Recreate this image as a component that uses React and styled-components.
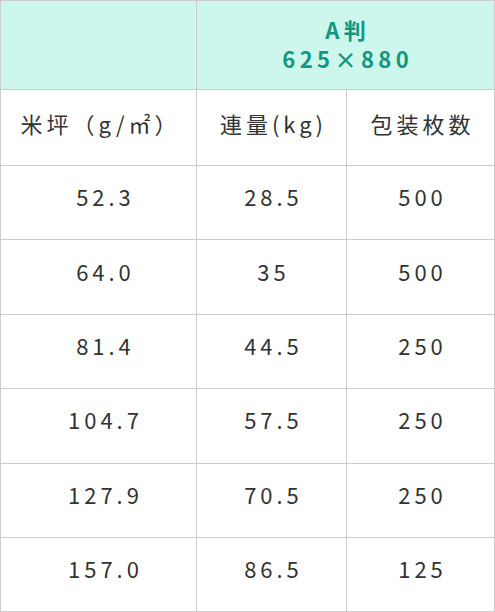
import React from 'react';
import styled, { createGlobalStyle } from 'styled-components';

const GlobalStyle = createGlobalStyle`
  html, body {
    margin: 0;
    padding: 0;
    background: #ffffff;
  }
  body {
    font-family: "Noto Sans CJK JP", "Noto Sans", sans-serif;
  }
`;

const SizeTable = styled.table`
  width: 494px;
  border-collapse: collapse;
  table-layout: fixed;
  color: #333333;
`;

const HeadCell = styled.th`
  height: 86px;
  padding: 0 0 2px 0.2em;
  background-color: #cdf7ec;
  border: 1px solid #cccccc;
  color: #12967f;
  font-size: 22px;
  font-weight: 700;
  line-height: 29px;
  letter-spacing: 0.2em;
  text-align: center;
`;

const LabelCell = styled.td`
  height: 67px;
  padding: 0 0 8px 0.18em;
  border: 1px solid #cccccc;
  font-size: 22px;
  font-weight: 400;
  line-height: 1.4;
  letter-spacing: 0.18em;
  text-align: center;
`;

const ValueCell = styled.td`
  height: 61.4px;
  padding: 0 0 12px ${({ $first }) => ($first ? '14px' : '4px')};
  border: 1px solid #cccccc;
  font-size: 22px;
  font-weight: 400;
  line-height: 1.4;
  letter-spacing: 0.18em;
  text-align: center;
`;

const rows = [
  ['52.3', '28.5', '500'],
  ['64.0', '35', '500'],
  ['81.4', '44.5', '250'],
  ['104.7', '57.5', '250'],
  ['127.9', '70.5', '250'],
  ['157.0', '86.5', '125'],
];

const App = () => (
  <>
    <GlobalStyle />
    <SizeTable>
      <colgroup>
        <col style={{ width: 196 }} />
        <col style={{ width: 150 }} />
        <col style={{ width: 148 }} />
      </colgroup>
      <thead>
        <tr>
          <HeadCell />
          <HeadCell colSpan={2}>
            A判
            <br />
            625×880
          </HeadCell>
        </tr>
      </thead>
      <tbody>
        <tr>
          <LabelCell>米坪（g/㎡）</LabelCell>
          <LabelCell>連量(kg)</LabelCell>
          <LabelCell>包装枚数</LabelCell>
        </tr>
        {rows.map((row) => (
          <tr key={row[0]}>
            {row.map((value, i) => (
              <ValueCell key={i} $first={i === 0}>
                {value}
              </ValueCell>
            ))}
          </tr>
        ))}
      </tbody>
    </SizeTable>
  </>
);

export default App;
